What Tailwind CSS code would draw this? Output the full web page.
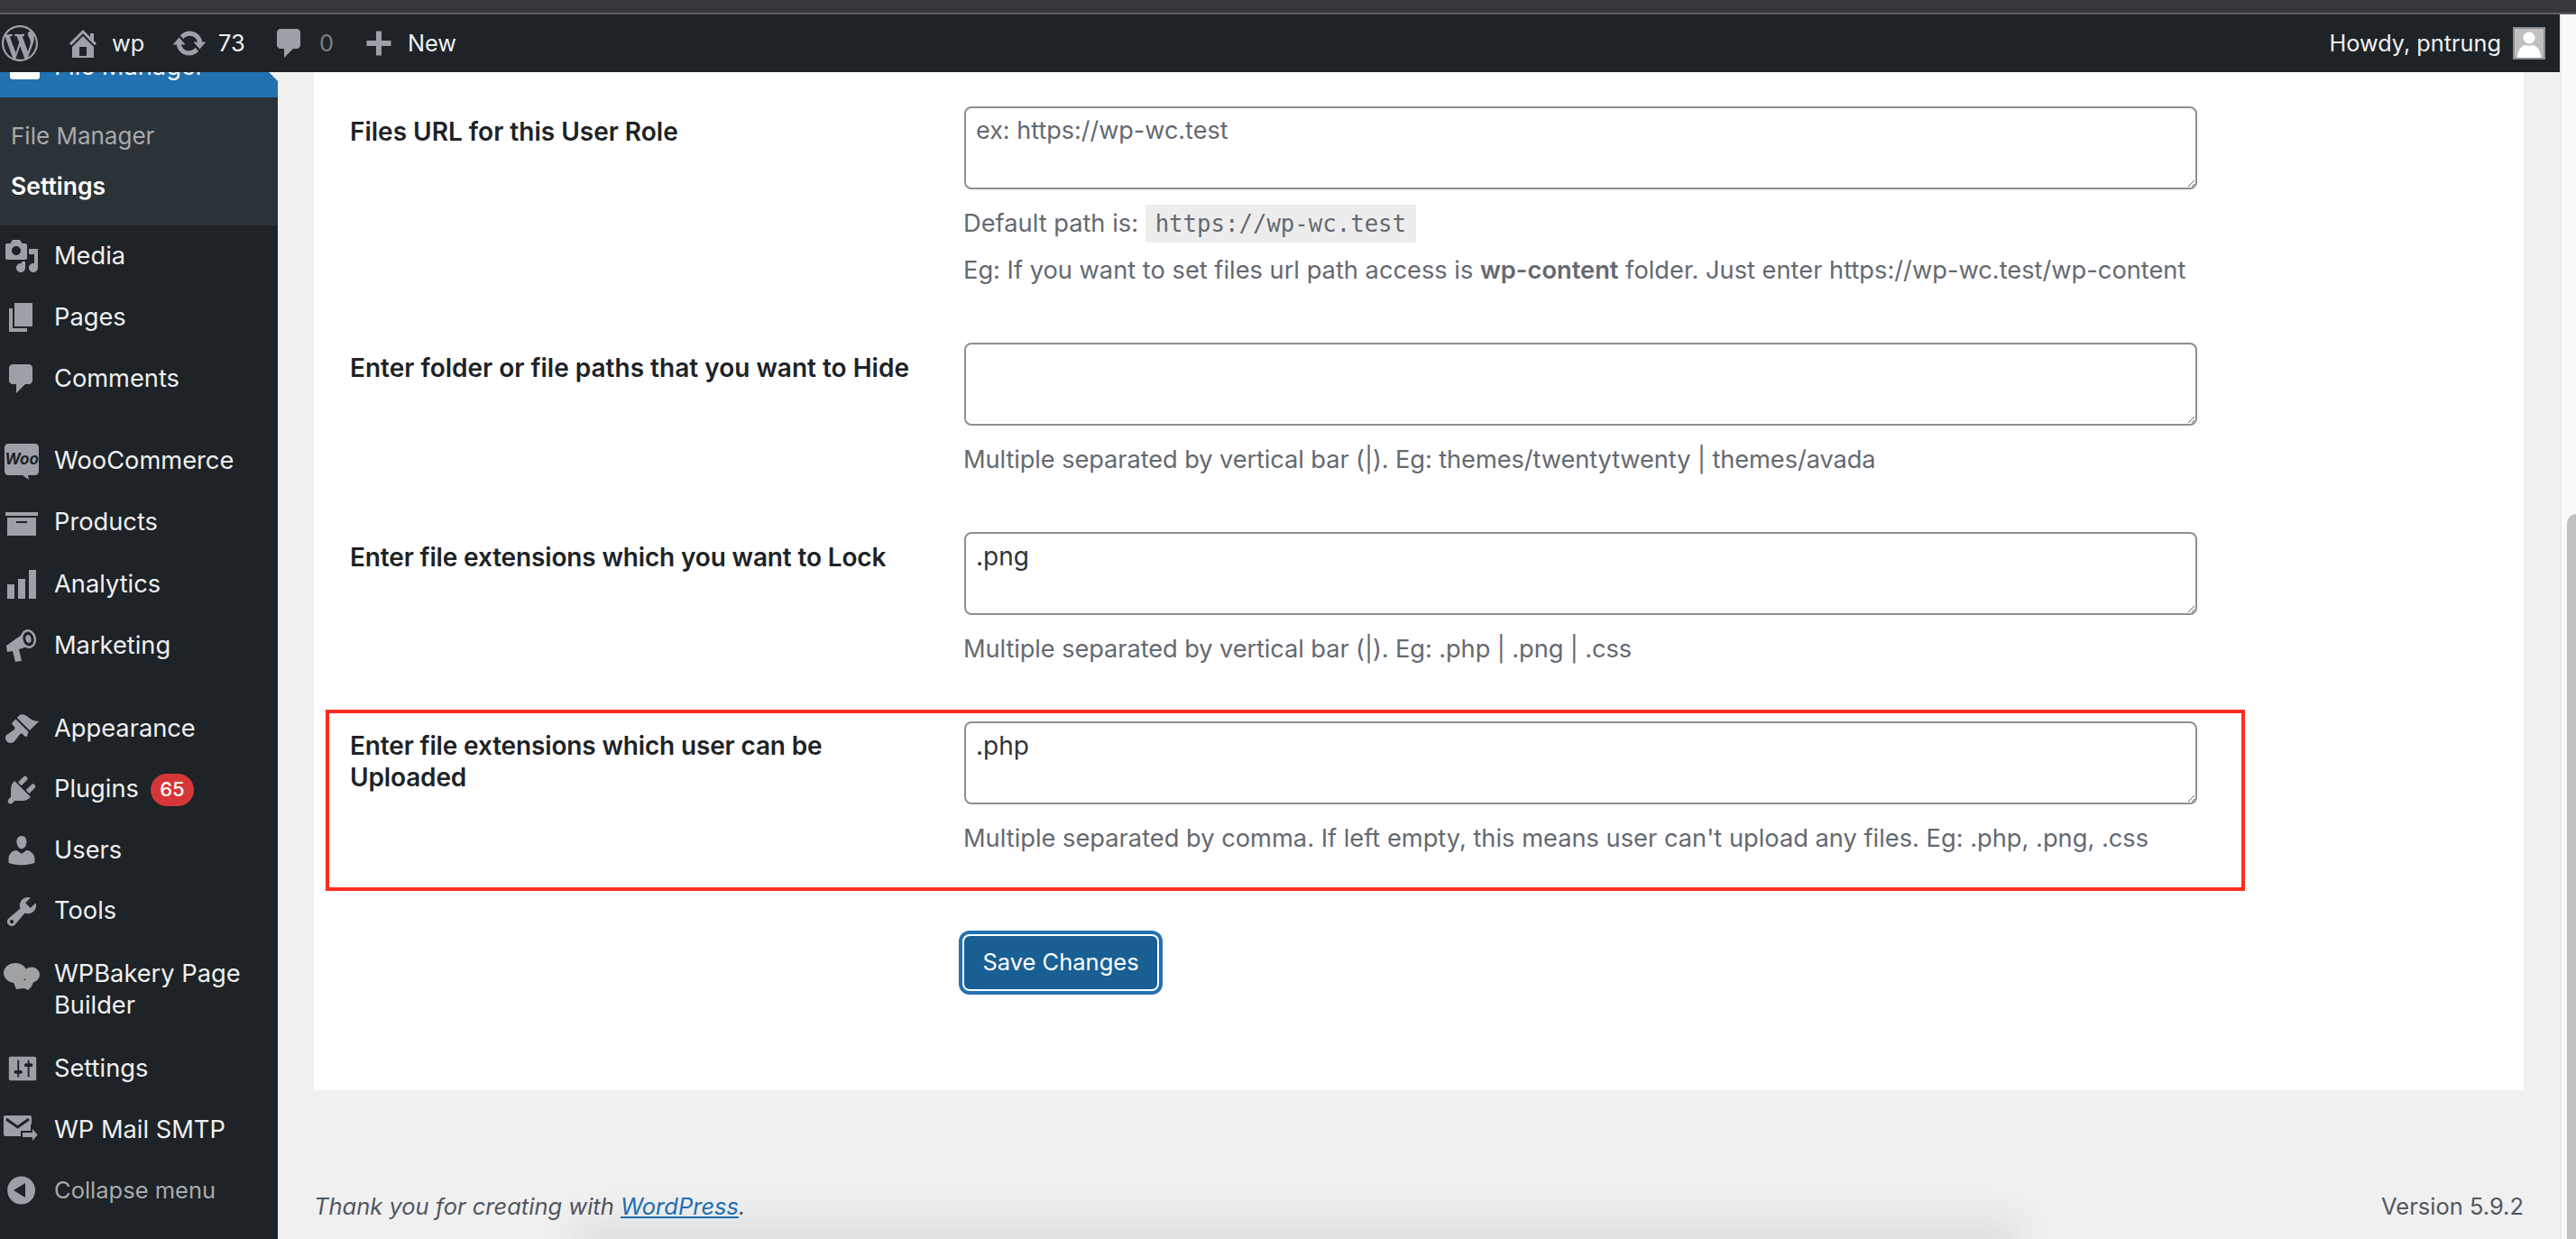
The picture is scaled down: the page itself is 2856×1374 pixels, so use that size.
<!DOCTYPE html>
<html lang="en">
<head>
    <meta charset="UTF-8">
    <title>File Manager Settings</title>
    <script src="https://cdn.jsdelivr.net/npm/@tailwindcss/browser@4"></script>
</head>
<body class="relative h-screen overflow-hidden bg-[#f0f0f1] font-['Inter',sans-serif] text-[#1d2327]">
    <div class="h-[14px] bg-[#38383c]"></div>
    <div class="h-[2px] bg-[#5e5f62]"></div>
    <div class="flex h-[1358px]">
        <div class="w-[2838px] flex flex-col">
            <!-- admin bar -->
            <div class="relative z-10 h-[64px] shrink-0 bg-[#1d2327] flex items-center text-[25.3px] text-[#f0f0f1] pl-[2px] pr-[16px]">
                <svg class="w-[40px] h-[40px] text-[#9ca1a7]" viewBox="0 0 20 20" fill="currentColor"><path d="M20 10c0-5.51-4.49-10-10-10C4.48 0 0 4.49 0 10c0 5.52 4.48 10 10 10 5.51 0 10-4.48 10-10zM7.78 15.37L4.37 6.22c.55-.02 1.17-.08 1.17-.08.5-.06.44-1.13-.06-1.11 0 0-1.45.11-2.37.11-.18 0-.37 0-.58-.01C4.12 2.69 6.87 1.11 10 1.11c2.33 0 4.45.87 6.05 2.34-.68-.11-1.65.39-1.65 1.58 0 .74.45 1.36.9 2.1.35.61.55 1.36.55 2.46 0 1.49-1.4 5-1.4 5l-3.03-8.37c.54-.02.82-.17.82-.17.5-.05.44-1.25-.06-1.22 0 0-1.44.12-2.38.12-.87 0-2.33-.12-2.33-.12-.5-.03-.56 1.2-.06 1.22l.92.08 1.26 3.41zM17.41 10c.24-.64.74-1.87.43-4.25.7 1.29 1.05 2.71 1.05 4.25 0 3.29-1.73 6.24-4.4 7.78.97-2.59 1.94-5.2 2.92-7.78zM6.1 18.09C3.12 16.65 1.11 13.53 1.11 10c0-1.3.23-2.48.72-3.59C3.25 10.3 4.67 14.2 6.1 18.09zm4.03-6.63l2.58 6.98c-.86.29-1.76.45-2.71.45-.79 0-1.57-.11-2.29-.33.81-2.38 1.62-4.74 2.42-7.1z"/></svg>
                <svg class="w-[40px] h-[40px] ml-[30px] text-[#9ca1a7]" viewBox="0 0 20 20" fill="currentColor"><path d="M16 8.5l1.53 1.53-1.06 1.06L10 4.62l-6.47 6.47-1.06-1.06L10 2.5l4 4v-2h2v4zm-6-2.46l6 5.99V18H4v-5.97zM12 17v-5H8v5h4z"/></svg>
                <span class="ml-[12px] w-[36px]">wp</span>
                <svg class="w-[40px] h-[40px] ml-[30px] text-[#9ca1a7]" viewBox="0 0 20 20" fill="currentColor"><path d="M10.2 3.28c3.53 0 6.43 2.61 6.92 6h2.08l-3.5 4-3.5-4h2.32c-.45-1.97-2.21-3.45-4.32-3.45-1.45 0-2.73.71-3.54 1.78L4.95 5.66C6.23 4.2 8.11 3.28 10.2 3.28zm-.4 13.44c-3.52 0-6.43-2.61-6.92-6H.8l3.5-4c1.17 1.33 2.33 2.67 3.5 4H5.48c.45 1.97 2.21 3.45 4.32 3.45 1.45 0 2.73-.71 3.54-1.78l1.71 1.95c-1.28 1.46-3.15 2.38-5.25 2.38z"/></svg>
                <span class="ml-[12px] w-[30px]">73</span>
                <svg class="w-[40px] h-[40px] ml-[29px] text-[#9ca1a7]" viewBox="0 0 20 20" fill="currentColor"><path d="M5 2h9c1.1 0 2 .9 2 2v7c0 1.1-.9 2-2 2h-2l-5 5v-5H5c-1.1 0-2-.9-2-2V4c0-1.1.9-2 2-2z"/></svg>
                <span class="ml-[13px] w-[15px] text-[#7b8084]">0</span>
                <svg class="w-[30px] h-[30px] ml-[36px] text-[#9ca1a7]" viewBox="0 0 20 20" fill="currentColor"><path d="M8 1h4v7h7v4h-7v7H8v-7H1V8h7z"/></svg>
                <span class="ml-[17px]">New</span>
                <span class="ml-auto">Howdy, pntrung</span>
                <div class="ml-[13px] w-[36px] h-[36px] border-2 border-[#8c8f94] bg-[#c0c0c0] overflow-hidden">
                    <svg class="w-full h-full" viewBox="0 0 32 32" fill="#ffffff"><circle cx="16" cy="10" r="6.5"/><path d="M3 32c0-8 4-13 9-14 2 1 6 1 8 0 5 1 9 6 9 14z"/></svg>
                </div>
            </div>

            <div class="flex flex-1 min-h-0">
                <!-- sidebar -->
                <div class="relative w-[308px] shrink-0 bg-[#1d2327] overflow-hidden text-[27.25px] text-[#f0f0f1]">
                    <div class="relative -mt-[40px] h-[68px] bg-[#2271b1] text-white flex items-center">
                        <div class="w-[60px] flex justify-center"><div class="w-[33px] h-[24px] bg-white rounded-[3px] mt-[3px] -ml-[6px]"></div></div>
                        <span>File Manager</span>
                        <svg class="absolute right-0 top-[18px] w-[16px] h-[32px]" viewBox="0 0 16 32" fill="#f0f0f1"><path d="M16 0v32L0 16z"/></svg>
                    </div>
                    <div class="bg-[#2c3338] h-[142px] pl-[12px] pt-[14px]">
                        <div class="h-[57px] flex items-center text-[26px] text-[#a7aaad]">File Manager</div>
                        <div class="h-[55px] flex items-center text-[26.5px] font-semibold text-white">Settings</div>
                    </div>

                    <div class="h-[68.2px] flex items-center">
                        <div class="w-[60px] pl-[4px]"><svg class="w-[40px] h-[40px] text-[#9ca1a7]" viewBox="0 0 20 20" fill="currentColor"><path d="M13 11V4c0-.55-.45-1-1-1h-1.67L9 1H5L3.67 3H2c-.55 0-1 .45-1 1v7c0 .55.45 1 1 1h10c.55 0 1-.45 1-1zM7 4.5c1.38 0 2.5 1.12 2.5 2.5S8.38 9.5 7 9.5 4.5 8.38 4.5 7 5.62 4.5 7 4.5zM14 6h5v10.5c0 1.38-1.12 2.5-2.5 2.5S14 17.88 14 16.5s1.12-2.5 2.5-2.5c.17 0 .34.02.5.05V9h-3V6zm-4 8.05V13h2v3.5c0 1.38-1.12 2.5-2.5 2.5S7 17.88 7 16.5 8.12 14 9.5 14c.17 0 .34.02.5.05z"/></svg></div>
                        <span>Media</span>
                    </div>
                    <div class="h-[68.2px] flex items-center">
                        <div class="w-[60px] pl-[4px]"><svg class="w-[40px] h-[40px] text-[#9ca1a7]" viewBox="0 0 20 20" fill="currentColor"><path d="M6 15V2h10v13H6zm-1 1h8v2H3V5h2v11z"/></svg></div>
                        <span>Pages</span>
                    </div>
                    <div class="h-[68.2px] flex items-center">
                        <div class="w-[60px] pl-[4px]"><svg class="w-[40px] h-[40px] text-[#9ca1a7]" viewBox="0 0 20 20" fill="currentColor"><path d="M5 2h9c1.1 0 2 .9 2 2v7c0 1.1-.9 2-2 2h-2l-5 5v-5H5c-1.1 0-2-.9-2-2V4c0-1.1.9-2 2-2z"/></svg></div>
                        <span>Comments</span>
                    </div>

                    <div class="mt-[23px] h-[68.2px] flex items-center">
                        <div class="w-[60px] pl-[5px]">
                            <svg class="block w-[38px] h-[40px] text-[#9ca1a7]" viewBox="0 0 38 40" fill="currentColor"><path d="M4 0h30c2 0 4 2 4 4v27c0 2-2 4-4 4H26l1 5-7-5H4c-2 0-4-2-4-4V4c0-2 2-4 4-4z"/><text x="19" y="23" text-anchor="middle" font-size="17" font-weight="700" font-style="italic" font-family="Inter, sans-serif" fill="#1d2327">Woo</text></svg>
                        </div>
                        <span>WooCommerce</span>
                    </div>
                    <div class="h-[68.2px] flex items-center">
                        <div class="w-[60px] pl-[4px]"><svg class="w-[40px] h-[40px] text-[#9ca1a7]" viewBox="0 0 20 20" fill="currentColor"><path d="M19 4v2H1V4h18zM2 7h16v10H2V7zm11 3V9H7v1h6z"/></svg></div>
                        <span>Products</span>
                    </div>
                    <div class="h-[68.2px] flex items-center">
                        <div class="w-[60px] pl-[4px]"><svg class="w-[40px] h-[40px] text-[#9ca1a7]" viewBox="0 0 20 20" fill="currentColor"><path d="M18 18V2h-4v16h4zm-6 0V7H8v11h4zm-6 0v-8H2v8h4z"/></svg></div>
                        <span>Analytics</span>
                    </div>
                    <div class="h-[68.2px] flex items-center">
                        <div class="w-[60px] pl-[6px]"><svg class="block w-[36px] h-[36px] text-[#9ca1a7]" viewBox="0 0 36 36" fill="currentColor"><path d="M1 18 25 1l6 16-16 5 3 13-7 1-3-12-6 1z"/><ellipse cx="25.500" cy="10.500" rx="8.500" ry="10.500" transform="rotate(-14 25.500 10.500)"/><ellipse cx="25.500" cy="10.500" rx="6" ry="8" fill="#1d2327" transform="rotate(-14 25.500 10.500)"/><ellipse cx="25.500" cy="10.500" rx="3" ry="4.500" transform="rotate(-14 25.500 10.500)"/></svg></div>
                        <span>Marketing</span>
                    </div>

                    <div class="mt-[24px] h-[67.6px] flex items-center">
                        <div class="w-[60px] pl-[4px]"><svg class="w-[40px] h-[40px] text-[#9ca1a7]" viewBox="0 0 20 20" fill="currentColor"><path d="M14.48 11.06L7.41 3.99l1.5-1.5c.5-.56 2.3-.47 3.51.32 1.21.8 1.43 1.28 2.91 2.1 1.18.64 2.45 1.26 4.45.85zm-.71.71L6.7 4.7 4.93 6.47c-.39.39-.39 1.02 0 1.41l1.06 1.06c.39.39.39 1.03 0 1.42-.6.6-1.43 1.11-2.21 1.69-.35.26-.7.53-1.01.84C1.43 13.23 1 14.2 1 15c0 .99.48 1.59.87 2.13.38.54.98.87 2.13.87.8 0 1.77-.43 2.61-1.77.31-.31.58-.66.84-1.01.58-.78 1.09-1.61 1.69-2.21.39-.39 1.03-.39 1.42 0l1.06 1.06c.39.39 1.02.39 1.41 0z"/></svg></div>
                        <span>Appearance</span>
                    </div>
                    <div class="h-[67.6px] flex items-center">
                        <div class="w-[60px] pl-[4px]"><svg class="w-[40px] h-[40px] text-[#9ca1a7]" viewBox="0 0 20 20" fill="currentColor"><path d="M13.11 4.36L9.87 7.6 8 5.73l3.24-3.24c.35-.34 1.05-.2 1.56.32.52.51.66 1.21.31 1.55zm-8 1.77l.91-1.12 9.01 9.01-1.19.84c-.71.71-2.63 1.16-3.82 1.16H6.14L4.9 17.26c-.59.59-1.54.59-2.12 0-.59-.58-.59-1.53 0-2.12l1.24-1.24v-3.88c0-1.13.4-3.19 1.09-3.89zm7.26 3.97l3.24-3.24c.34-.35 1.04-.21 1.55.31.52.51.66 1.21.31 1.55l-3.24 3.25z"/></svg></div>
                        <span>Plugins</span>
                        <span class="ml-[13px] h-[36px] w-[48px] rounded-full bg-[#d63638] text-white text-[22px] font-medium flex items-center justify-center">65</span>
                    </div>
                    <div class="h-[67.6px] flex items-center">
                        <div class="w-[60px] pl-[4px]"><svg class="w-[40px] h-[40px] text-[#9ca1a7]" viewBox="0 0 20 20" fill="currentColor"><path d="M10 9.25c-2.27 0-2.73-3.44-2.73-3.44C7 4.02 7.82 2 9.97 2c2.16 0 2.98 2.02 2.71 3.81 0 0-.41 3.44-2.68 3.44zm0 2.57L12.72 10c2.39 0 4.52 2.33 4.52 4.53v2.49s-3.65 1.13-7.24 1.13c-3.65 0-7.24-1.13-7.24-1.13v-2.49c0-2.25 1.94-4.48 4.47-4.48z"/></svg></div>
                        <span>Users</span>
                    </div>
                    <div class="h-[67.6px] flex items-center">
                        <div class="w-[60px] pl-[4px]"><svg class="w-[40px] h-[40px] text-[#9ca1a7]" viewBox="0 0 20 20" fill="currentColor"><path d="M16.68 9.77c-1.34 1.34-3.3 1.67-4.95.99l-5.41 6.52c-.99.99-2.59.99-3.58 0s-.99-2.59 0-3.57l6.52-5.42c-.68-1.65-.35-3.61.99-4.95 1.28-1.28 3.12-1.62 4.72-1.06l-2.89 2.89 2.82 2.82 2.86-2.87c.53 1.58.18 3.39-1.08 4.65zM3.81 16.21c.4.39 1.04.39 1.43 0 .4-.4.4-1.04 0-1.43-.39-.4-1.03-.4-1.43 0-.39.39-.39 1.03 0 1.43z"/></svg></div>
                        <span>Tools</span>
                    </div>
                    <div class="h-[107px] flex items-start pt-[17px]">
                        <div class="w-[60px] pl-[4px] pt-[6px] shrink-0">
                            <svg class="block w-[40px] h-[30px] text-[#a0a1a3]" viewBox="0 0 40 30" fill="currentColor"><ellipse cx="13" cy="11" rx="13" ry="11"/><ellipse cx="31" cy="13" rx="9" ry="8.500"/><path d="M10 19h24l-3 7-4 4-4-2-9 1-2-5z"/></svg>
                        </div>
                        <div class="leading-[35px] w-[240px]">WPBakery Page Builder</div>
                    </div>
                    <div class="h-[67.6px] flex items-center">
                        <div class="w-[60px] pl-[6px]"><svg class="block w-[38px] h-[38px] text-[#9ca1a7]" viewBox="0 0 20 20" fill="currentColor"><path d="M18 16V4c0-.55-.45-1-1-1H3c-.55 0-1 .45-1 1v12c0 .55.45 1 1 1h14c.55 0 1-.45 1-1zM8 11h1c.55 0 1 .45 1 1s-.45 1-1 1H8v1.5c0 .28-.22.5-.5.5s-.5-.22-.5-.5V13H6c-.55 0-1-.45-1-1s.45-1 1-1h1V5.5c0-.28.22-.5.5-.5s.5.22.5.5V11zm5-2h-1c-.55 0-1-.45-1-1s.45-1 1-1h1V5.5c0-.28.22-.5.5-.5s.5.22.5.5V7h1c.55 0 1 .45 1 1s-.45 1-1 1h-1v5.500c0 .28-.22.5-.5.5s-.5-.22-.5-.5V9z"/></svg></div>
                        <span>Settings</span>
                    </div>
                    <div class="h-[67.6px] flex items-center">
                        <div class="w-[60px] pl-[4px]"><svg class="block w-[40px] h-[32px] text-[#9ca1a7]" viewBox="0 0 40 32" fill="currentColor"><rect x="0" y="0" width="31" height="23" rx="2"/><path d="M3 4l12.500 9L28 4" fill="none" stroke="#1d2327" stroke-width="3"/><path d="M20 18h11v-6l8 9.500-8 9.500v-6H20z" stroke="#1d2327" stroke-width="2"/></svg></div>
                        <span>WP Mail SMTP</span>
                    </div>
                    <div class="h-[66px] flex items-center text-[25.5px] text-[#a7aaad]">
                        <div class="w-[60px] pl-[4px]"><svg class="w-[40px] h-[40px] text-[#9ca1a7]" viewBox="0 0 20 20" fill="currentColor"><path d="M9.800 2.300a7.700 7.700 0 1 0 0 15.400 7.700 7.700 0 0 0 0-15.400zM12 6v8L5.500 10z" fill-rule="evenodd"/></svg></div>
                        <span>Collapse menu</span>
                    </div>
                </div>

                <!-- main -->
                <div class="flex-1 min-w-0 pl-[40px] pr-[40px] flex flex-col">
                    <div class="h-[1129px] shrink-0 bg-white pl-[40px] pt-[38px]">
                        <div class="flex">
                            <div class="w-[681px] shrink-0 pt-[10px] text-[28px] leading-[36px] font-semibold">Files URL for this User Role</div>
                            <div class="w-[1367px] pb-[62px]">
                                <textarea placeholder="ex: https://wp-wc.test" class="block w-full h-[92px] border-2 border-[#8c8f94] rounded-[8px] px-[11px] py-[5px] text-[28px] placeholder:text-[27px] leading-[40px] text-[#2c3338] placeholder:text-[#646970] resize-y"></textarea>
                                <p class="mt-[20px] -ml-[1px] text-[27.25px] leading-[36px] text-[#646970]">Default path is: <code class="bg-[#ededed] px-[11px] py-[6px] font-['DejaVu_Sans_Mono',monospace] text-[25.7px]">https://wp-wc.test</code></p>
                                <p class="mt-[16px] -ml-[1px] text-[27.25px] leading-[36px] text-[#646970]">Eg: If you want to set files url path access is <strong class="font-semibold">wp-content</strong> folder. Just enter https://wp-wc.test/wp-content</p>
                            </div>
                        </div>
                        <div class="flex">
                            <div class="w-[681px] shrink-0 pt-[10px] text-[28px] leading-[36px] font-semibold">Enter folder or file paths that you want to Hide</div>
                            <div class="w-[1367px] pb-[62px]">
                                <textarea class="block w-full h-[92px] border-2 border-[#8c8f94] rounded-[8px] px-[11px] py-[5px] text-[28px] leading-[40px] text-[#2c3338] resize-y"></textarea>
                                <p class="mt-[20px] -ml-[1px] text-[27.25px] leading-[36px] tracking-[-0.1px] text-[#646970]">Multiple separated by vertical bar (|). Eg: themes/twentytwenty | themes/avada</p>
                            </div>
                        </div>
                        <div class="flex">
                            <div class="w-[681px] shrink-0 pt-[10px] text-[28px] leading-[36px] tracking-[-0.15px] font-semibold">Enter file extensions which you want to Lock</div>
                            <div class="w-[1367px] pb-[62px]">
                                <textarea class="block w-full h-[92px] border-2 border-[#8c8f94] rounded-[8px] px-[11px] py-[5px] text-[28px] leading-[40px] text-[#2c3338] resize-y">.png</textarea>
                                <p class="mt-[20px] -ml-[1px] text-[27.25px] leading-[36px] tracking-[-0.1px] text-[#646970]">Multiple separated by vertical bar (|). Eg: .php | .png | .css</p>
                            </div>
                        </div>
                        <div class="relative flex">
                            <div class="absolute -left-[27px] -top-[13px] w-[2128px] h-[201px] border-4 border-[#ff2d20] pointer-events-none"></div>
                            <div class="w-[681px] shrink-0 pt-[10px] pr-[60px] text-[28px] leading-[35px] tracking-[-0.15px] font-semibold">Enter file extensions which user can be Uploaded</div>
                            <div class="w-[1367px]">
                                <textarea class="block w-full h-[92px] border-2 border-[#8c8f94] rounded-[8px] px-[11px] py-[5px] text-[28px] leading-[40px] text-[#2c3338] resize-y">.php</textarea>
                                <p class="mt-[20px] -ml-[1px] text-[27.25px] leading-[36px] text-[#646970]">Multiple separated by comma. If left empty, this means user can't upload any files. Eg: .php, .png, .css</p>
                            </div>
                        </div>
                        <div class="ml-[681px] mt-[90px]">
                            <button class="h-[59px] w-[214px] rounded-[6px] bg-[#195f94] text-white text-[25.5px] shadow-[0_0_0_2px_#ffffff,0_0_0_6px_#2271b1]">Save Changes</button>
                        </div>
                    </div>
                    <div class="flex justify-between items-center mt-[110px] text-[25.5px] text-[#50575e]">
                        <span class="italic">Thank you for creating with <a class="text-[#2271b1] underline">WordPress</a>.</span>
                        <span>Version 5.9.2</span>
                    </div>
                </div>
            </div>
        </div>
        <!-- scrollbar -->
        <div class="w-[18px] shrink-0 bg-[#fafafa] border-l-2 border-[#e8e8e8] pl-[6px] pt-[554px]">
            <div class="h-full w-[10px] bg-[#c1c1c1] rounded-tl-[10px]"></div>
        </div>
    </div>
    <!-- soft window shadow along the bottom edge -->
    <div class="absolute left-[640px] right-[620px] -bottom-[30px] h-[50px] bg-black/8 blur-[20px] pointer-events-none"></div>
</body>
</html>
